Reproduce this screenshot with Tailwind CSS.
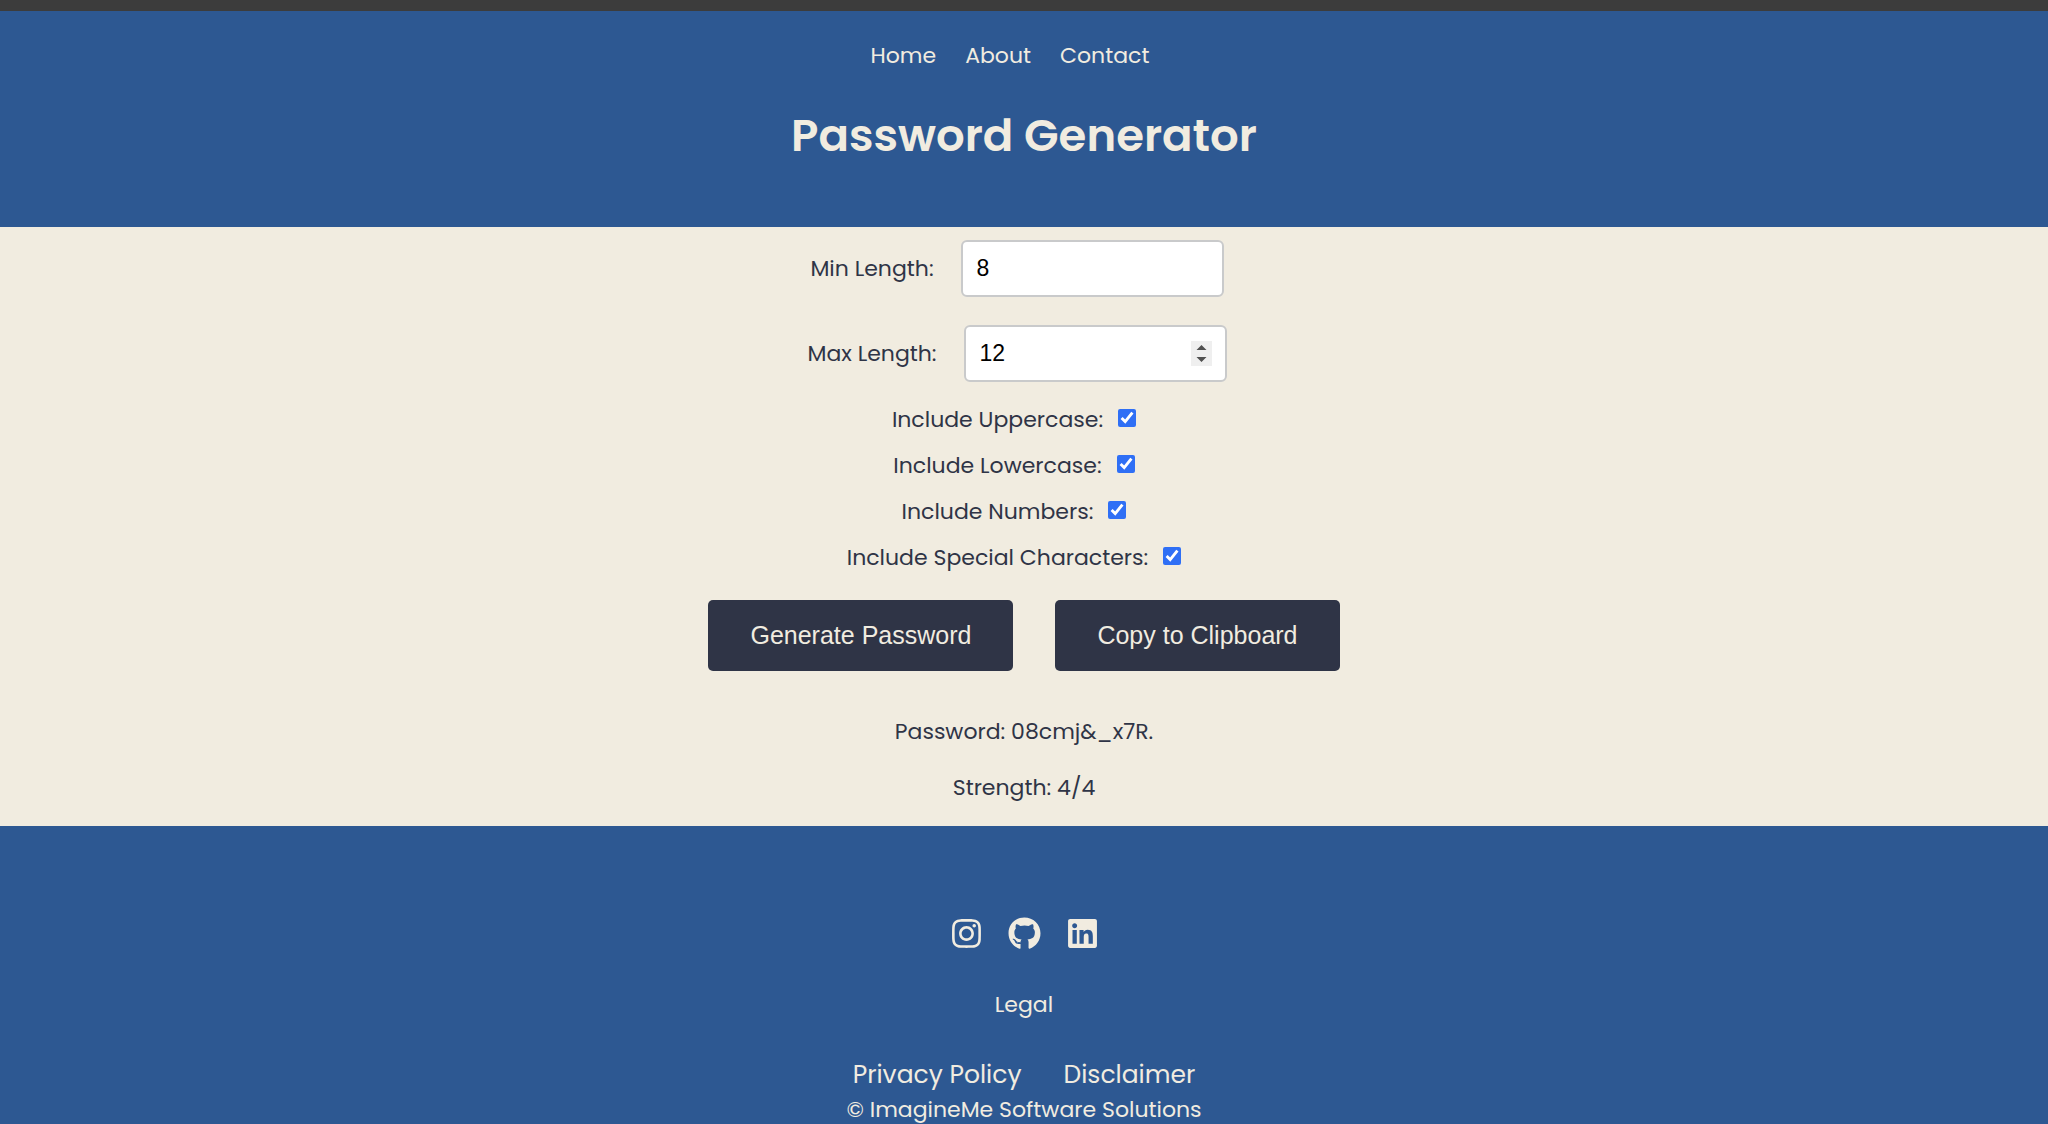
<!DOCTYPE html>
<html lang="en">
<head>
<meta charset="utf-8">
<meta name="viewport" content="width=device-width, initial-scale=1">
<title>Password Generator</title>
<script src="https://cdn.jsdelivr.net/npm/@tailwindcss/browser@4"></script>
</head>
<body class="flex min-h-screen flex-col border-t-[11px] border-[#3c3c3c] bg-[#2d5892] font-[Poppins,Inter,sans-serif] text-[22px] leading-[34px] text-[#f1ece0]">
<header class="flex h-[216px] flex-col items-center pt-7">
  <nav class="flex gap-[29px] pr-7">
    <a href="#">Home</a>
    <a href="#">About</a>
    <a href="#">Contact</a>
  </nav>
  <h1 class="mt-7 text-[45px] leading-[70px] font-semibold">Password Generator</h1>
</header>

<main class="flex flex-col items-center bg-[#f1ece0] pt-[13px] pb-[21px] text-[#2f3446]">
  <form class="flex flex-col items-center">
    <div class="flex items-center gap-[27px] pr-[14px]">
      <label for="min">Min Length:</label>
      <input id="min" type="number" value="8" class="h-[57px] w-[263px] rounded-[6px] border-2 border-[#c9cacb] bg-white px-[14px] font-[Arial,'Liberation_Sans',sans-serif] text-[23px] text-black [appearance:textfield]">
    </div>
    <div class="mt-7 flex items-center gap-[27px] pr-[14px]">
      <label for="max">Max Length:</label>
      <div class="relative">
        <input id="max" type="number" value="12" class="block h-[57px] w-[263px] rounded-[6px] border-2 border-[#c9cacb] bg-white px-[14px] font-[Arial,'Liberation_Sans',sans-serif] text-[23px] text-black [appearance:textfield]">
        <svg class="absolute top-4 right-[15px]" width="21" height="25" viewBox="0 0 21 25" aria-hidden="true"><path fill="#efefef" d="M0 0h21v25H0z"/><path fill="#505050" d="M5.500 9 10.500 4l5 5zM5.500 16l5 5 5-5z"/></svg>
      </div>
    </div>
    <div class="mt-[21px] flex flex-col items-center gap-3 pr-5">
      <div class="flex items-center gap-[15px]"><label for="upper">Include Uppercase:</label><input id="upper" type="checkbox" checked class="mb-1 size-[18px] accent-[#2f6ff5]"></div>
      <div class="flex items-center gap-[15px]"><label for="lower">Include Lowercase:</label><input id="lower" type="checkbox" checked class="mb-1 size-[18px] accent-[#2f6ff5]"></div>
      <div class="flex items-center gap-[15px]"><label for="numbers">Include Numbers:</label><input id="numbers" type="checkbox" checked class="mb-1 size-[18px] accent-[#2f6ff5]"></div>
      <div class="flex items-center gap-[15px]"><label for="special">Include Special Characters:</label><input id="special" type="checkbox" checked class="mb-1 size-[18px] accent-[#2f6ff5]"></div>
    </div>
    <div class="mt-[25px] flex gap-[42px] font-[Arial,'Liberation_Sans',sans-serif] text-[25px] text-[#f1ece0]">
      <button type="button" class="h-[71px] rounded-[5px] bg-[#2f3446] px-[42px] pb-0.5">Generate Password</button>
      <button type="button" class="h-[71px] rounded-[5px] bg-[#2f3446] px-[42px] pb-0.5">Copy to Clipboard</button>
    </div>
  </form>
  <p class="mt-11">Password: 08cmj&amp;_x7R.</p>
  <p class="mt-[22px]">Strength: 4/4</p>
</main>

<footer class="flex flex-col items-center pt-[91px]">
  <div class="flex items-center gap-[27px]">
    <a href="#" aria-label="Instagram"><svg width="29" height="33" viewBox="0 0 448 512" fill="currentColor"><path d="M224.100 141c-63.600 0-114.900 51.300-114.900 114.900s51.300 114.900 114.900 114.900S339 319.500 339 255.900 287.700 141 224.100 141zm0 189.600c-41.100 0-74.700-33.500-74.700-74.700s33.500-74.700 74.700-74.700 74.700 33.500 74.700 74.700-33.600 74.700-74.700 74.700zm146.400-194.300c0 14.900-12 26.800-26.800 26.800-14.900 0-26.800-12-26.800-26.800s12-26.800 26.800-26.800 26.800 12 26.800 26.800zm76.100 27.200c-1.700-35.900-9.900-67.700-36.200-93.900-26.200-26.200-58-34.400-93.900-36.200-37-2.100-147.900-2.100-184.900 0-35.800 1.700-67.600 9.900-93.900 36.100s-34.400 58-36.200 93.900c-2.100 37-2.100 147.900 0 184.900 1.700 35.900 9.900 67.700 36.200 93.900s58 34.400 93.900 36.200c37 2.100 147.900 2.100 184.900 0 35.900-1.700 67.700-9.900 93.900-36.200 26.200-26.200 34.400-58 36.200-93.900 2.100-37 2.100-147.800 0-184.800zM398.800 388c-7.800 19.600-22.900 34.700-42.600 42.600-29.500 11.700-99.500 9-132.100 9s-102.700 2.600-132.100-9c-19.600-7.800-34.700-22.900-42.600-42.600-11.700-29.500-9-99.500-9-132.100s-2.600-102.700 9-132.100c7.800-19.600 22.900-34.700 42.600-42.600 29.500-11.700 99.500-9 132.100-9s102.700-2.600 132.100 9c19.600 7.800 34.700 22.900 42.600 42.600 11.700 29.500 9 99.500 9 132.100s2.700 102.700-9 132.100z"/></svg></a>
    <a href="#" aria-label="GitHub"><svg width="33" height="33" viewBox="0 0 496 512" fill="currentColor"><path d="M165.900 397.400c0 2-2.300 3.600-5.200 3.600-3.300.3-5.600-1.300-5.600-3.600 0-2 2.300-3.600 5.200-3.600 3-.3 5.600 1.300 5.600 3.600zm-31.100-4.500c-.7 2 1.300 4.300 4.300 4.900 2.600 1 5.600 0 6.200-2s-1.300-4.300-4.300-5.200c-2.600-.7-5.500.3-6.200 2.300zm44.200-1.700c-2.900.7-4.900 2.600-4.600 4.900.3 2 2.900 3.300 5.900 2.600 2.900-.7 4.900-2.600 4.600-4.600-.3-1.900-3-3.200-5.900-2.900zM244.800 8C106.100 8 0 113.300 0 252c0 110.900 69.800 205.800 169.500 239.200 12.800 2.300 17.300-5.600 17.300-12.100 0-6.200-.3-40.400-.3-61.400 0 0-70 15-84.700-29.800 0 0-11.400-29.100-27.800-36.600 0 0-22.900-15.700 1.600-15.400 0 0 24.900 2 38.600 25.800 21.900 38.600 58.600 27.500 72.900 20.900 2.300-16 8.800-27.100 16-33.700-55.900-6.200-112.300-14.300-112.300-110.500 0-27.500 7.600-41.300 23.600-58.900-2.600-6.500-11.100-33.300 2.600-67.900 20.900-6.500 69 27 69 27 20-5.600 41.500-8.500 62.800-8.500s42.800 2.900 62.800 8.500c0 0 48.100-33.600 69-27 13.700 34.700 5.200 61.400 2.600 67.900 16 17.700 25.800 31.500 25.800 58.900 0 96.500-58.900 104.200-114.800 110.500 9.200 7.900 17 22.900 17 46.400 0 33.700-.3 75.400-.3 83.600 0 6.500 4.600 14.400 17.300 12.100C428.200 457.800 496 362.900 496 252 496 113.300 383.500 8 244.800 8z"/></svg></a>
    <a href="#" aria-label="LinkedIn"><svg width="29" height="33" viewBox="0 0 448 512" fill="currentColor"><path d="M416 32H31.900C14.300 32 0 46.500 0 64.300v383.400C0 465.500 14.300 480 31.900 480H416c17.600 0 32-14.500 32-32.300V64.300c0-17.800-14.400-32.300-32-32.300zM135.400 416H69V202.200h66.500V416zm-33.200-243c-21.300 0-38.500-17.300-38.500-38.500S80.900 96 102.200 96c21.200 0 38.500 17.300 38.500 38.500 0 21.300-17.200 38.500-38.500 38.500zm282.100 243h-66.400V312c0-24.800-.5-56.700-34.500-56.700-34.600 0-39.900 27-39.900 54.900V416h-66.400V202.200h63.700v29.200h.9c8.900-16.800 30.600-34.500 62.900-34.500 67.200 0 79.700 44.300 79.700 101.900V416z"/></svg></a>
  </div>
  <p class="mt-[38px]">Legal</p>
  <nav class="mt-[35px] flex gap-[42px] text-[25px] leading-[36px]">
    <a href="#">Privacy Policy</a>
    <a href="#">Disclaimer</a>
  </nav>
  <p>© ImagineMe Software Solutions</p>
</footer>
</body>
</html>
